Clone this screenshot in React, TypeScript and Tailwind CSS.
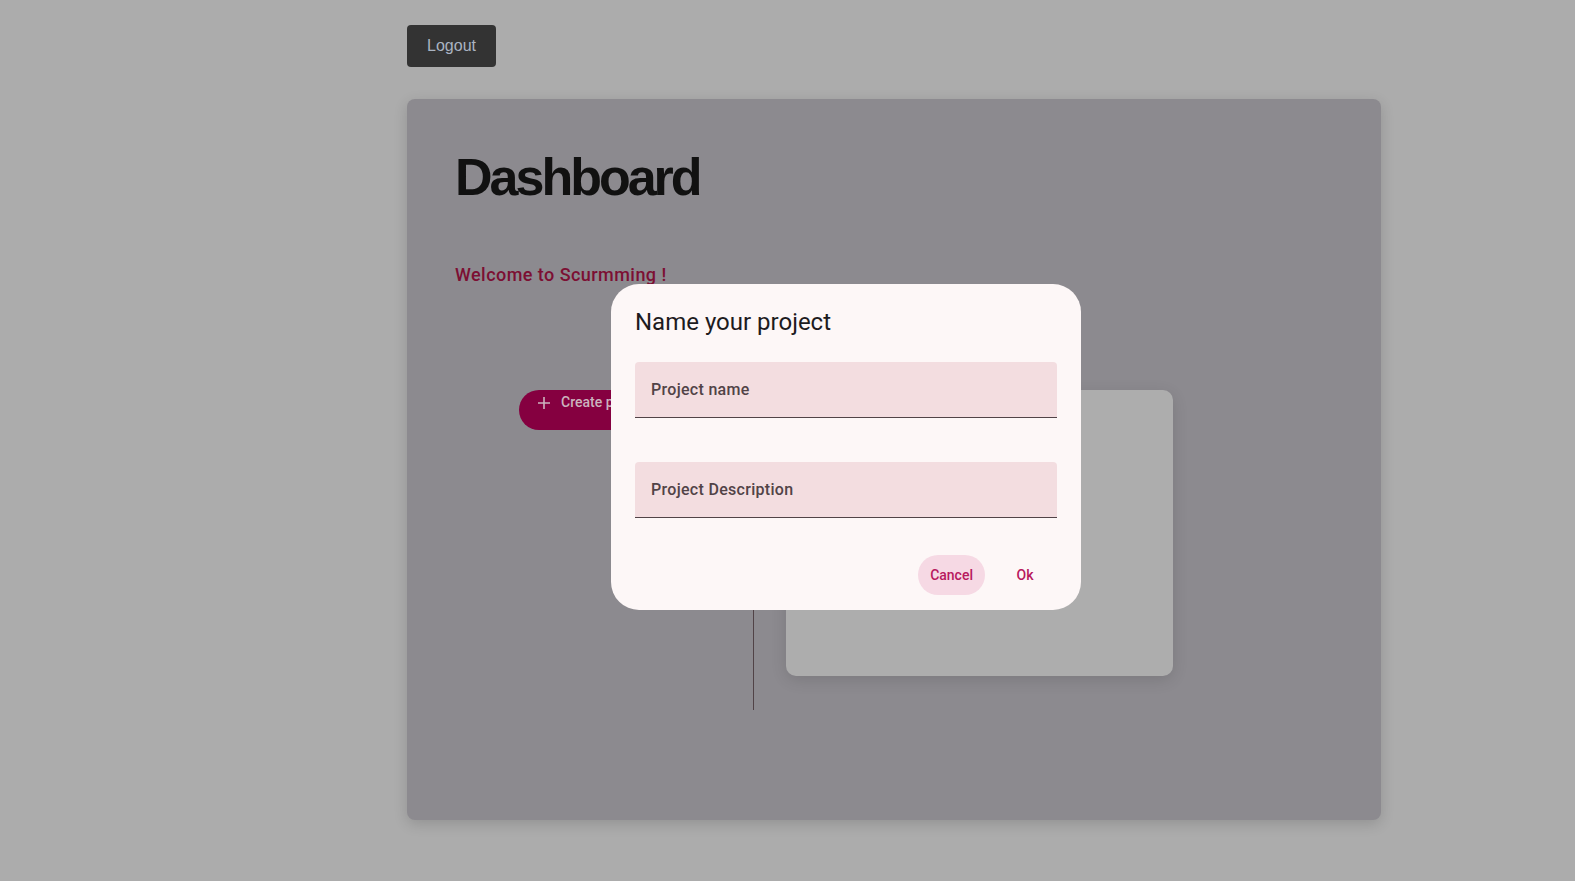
const roboto = { fontFamily: 'Roboto, "Noto Sans", sans-serif' }

function ProjectDialog() {
  return (
    <div
      className="absolute left-[611px] top-[284px] flex h-[326px] w-[470px] flex-col rounded-[28px] bg-[#fdf7f7] px-6 pt-[22px]"
      style={roboto}
    >
      <h2 className="text-[24px] leading-[32px] text-[#1d1b1e]">Name your project</h2>

      <div className="mt-[24px] flex h-[56px] items-center rounded-t-[4px] border-b border-[#514347] bg-[#f3dde0] px-4">
        <span className="text-[16px] font-medium tracking-[0.3px] text-[#514347]">Project name</span>
      </div>

      <div className="mt-[44px] flex h-[56px] items-center rounded-t-[4px] border-b border-[#514347] bg-[#f3dde0] px-4">
        <span className="text-[16px] font-medium tracking-[0.3px] text-[#514347]">Project Description</span>
      </div>

      <div className="mt-[37px] flex items-center justify-end gap-2">
        <button
          type="button"
          className="h-[40px] rounded-full bg-[#f6d9e4] px-3 text-[14px] font-medium text-[#b8195e]"
        >
          Cancel
        </button>
        <button
          type="button"
          className="h-[40px] min-w-[64px] rounded-full px-3 text-[14px] font-medium text-[#b8195e]"
        >
          Ok
        </button>
      </div>
    </div>
  )
}

export default function App() {
  return (
    <div className="relative min-h-screen bg-[#acacac]">
      <div className="ml-[407px] w-[974px] pt-[25px]">
        <button
          type="button"
          className="h-[42px] w-[89px] rounded-[4px] bg-[#333333] text-[16px] text-[#aab4c2]"
          style={{ fontFamily: '"Liberation Sans", Arial, sans-serif' }}
        >
          Logout
        </button>

        <div className="mt-[32px] h-[721px] rounded-[8px] bg-[#8c8a8f] px-12 pt-[50px] shadow-[0_4px_14px_rgba(0,0,0,0.15)]">
          <h1
            className="text-[52px] font-bold leading-[56px] tracking-[-3px] text-[#111111]"
            style={{ fontFamily: '"Liberation Sans", Arial, sans-serif' }}
          >
            Dashboard
          </h1>

          <p className="mt-[56px] text-[18px] font-medium tracking-[0.45px] text-[#7c0f33]" style={roboto}>
            Welcome to Scurmming !
          </p>

          <div className="mt-[102px] flex items-start">
            <div className="ml-[64px] flex w-[234px] items-start">
              <button
                type="button"
                className="flex h-[40px] w-[180px] items-start gap-[10px] rounded-full bg-[#850040] pl-[18px] pt-[2px] text-[14px] font-medium text-[#cbb4be]"
                style={roboto}
              >
                <svg width="14" height="14" viewBox="0 0 14 14" className="mt-[4px]">
                  <path d="M7 1v12M1 7h12" stroke="currentColor" strokeWidth="1.6" />
                </svg>
                <span>Create project</span>
              </button>
            </div>
            <div className="mt-[220px] h-[100px] w-px bg-[#514347]" />
            <div className="ml-[32px] h-[286px] w-[387px] rounded-[10px] bg-[#adadad] shadow-[0_4px_16px_rgba(0,0,0,0.12)]" />
          </div>
        </div>
      </div>

      <ProjectDialog />
    </div>
  )
}
